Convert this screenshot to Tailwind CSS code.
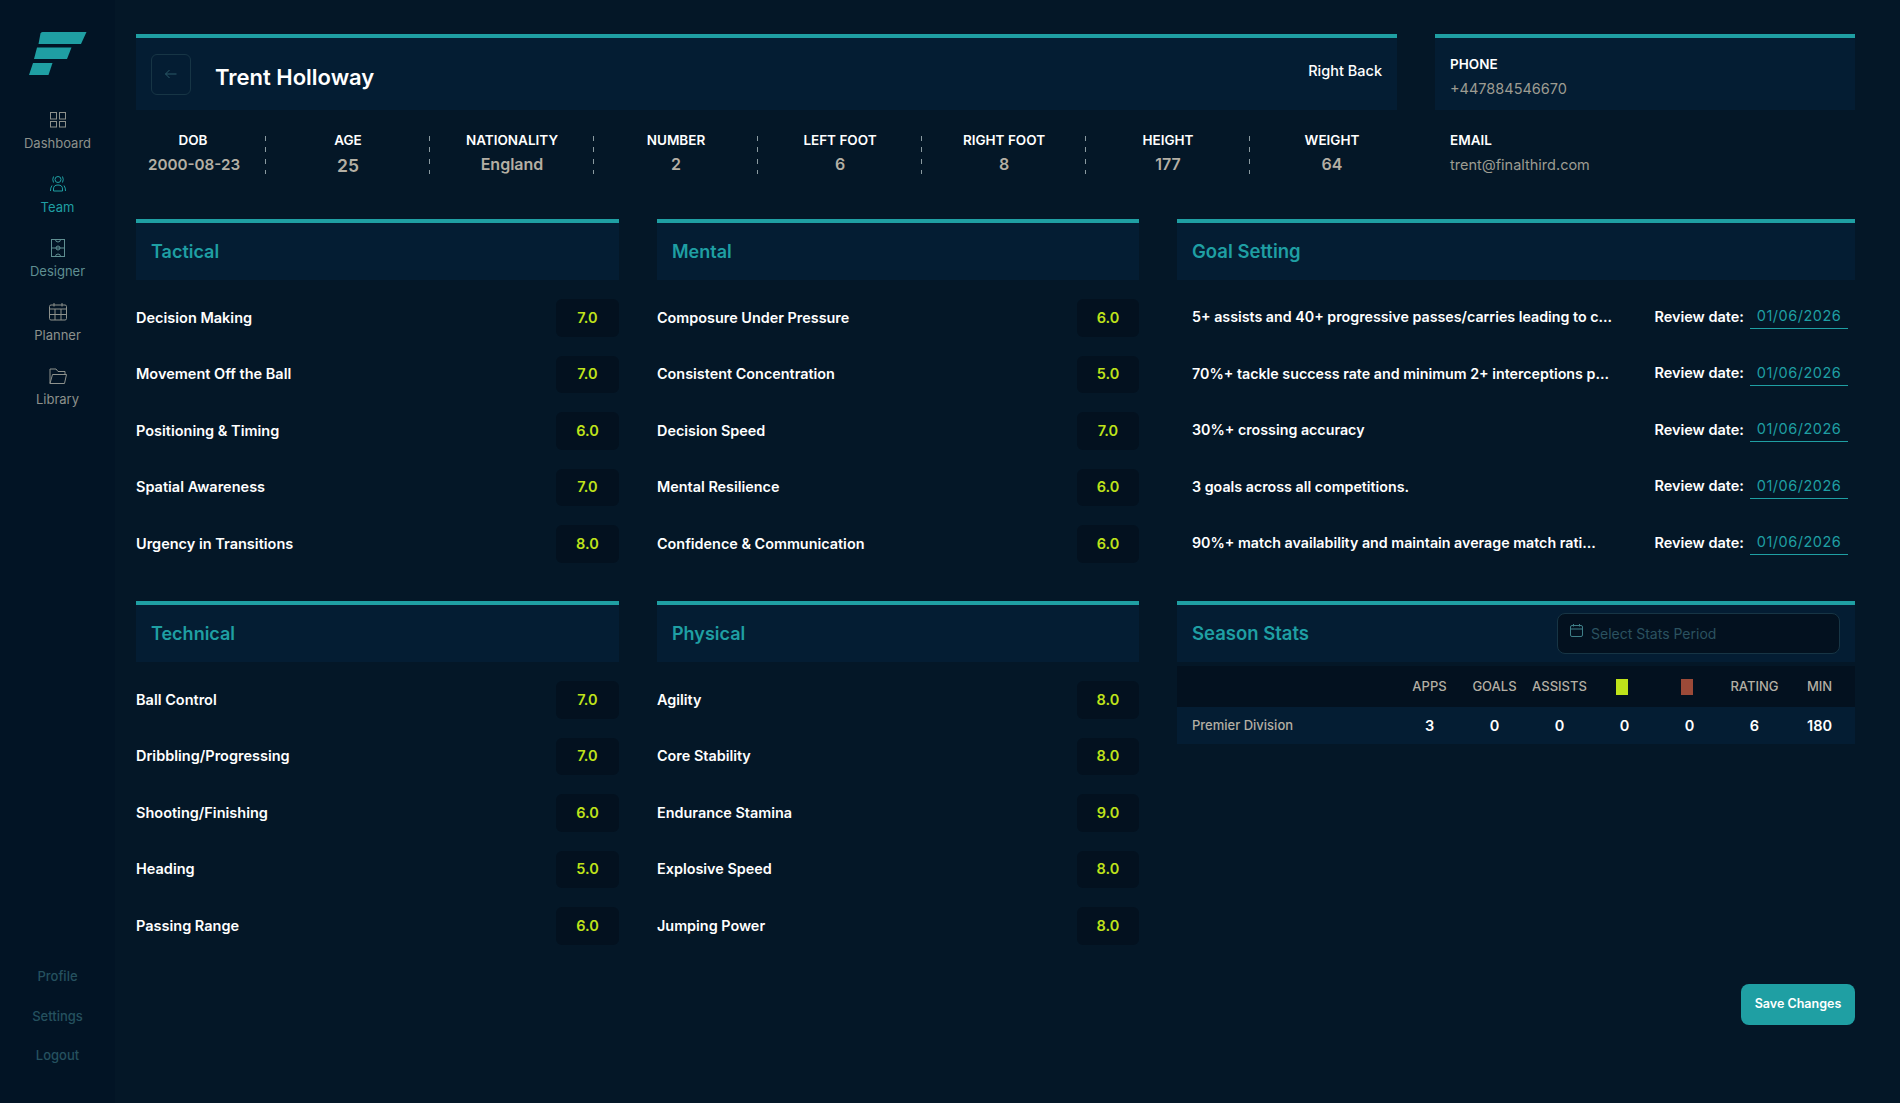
<!DOCTYPE html>
<html lang="en">
<head>
<meta charset="utf-8">
<title>Trent Holloway</title>
<script src="https://cdn.jsdelivr.net/npm/@tailwindcss/browser@4"></script>
</head>
<body class="bg-[#041727] [font-family:Inter,sans-serif] text-white">
<div class="flex h-[1103px] w-[1900px] overflow-hidden">
  <aside class="flex h-full w-[115px] shrink-0 flex-col items-center bg-[#021425] pt-[32px] pb-[38px]">
    <svg class="ml-[1px] h-[43px] w-[58px]" viewBox="0 0 58 43" fill="#1f9fa3"><path d="M11.500 1.500Q11.800 0 13.500 0H57.500L52 12H9.500Z"/><path d="M8 15.500H42.500L38 27H5Z"/><path d="M4 31H23.500L19.500 43H0Z"/></svg>
    <nav class="mt-[34.500px] flex w-full flex-col">
      <a class="flex h-[64px] flex-col items-center text-[#8d918c]">
        <svg class="h-[20px] w-[20px]" viewBox="0 0 20 20" fill="none" stroke="currentColor"><rect x="2.500" y="2.500" width="6" height="6.500"/><rect x="11.500" y="2.500" width="6" height="6.500"/><rect x="2.500" y="11.500" width="6" height="5.500"/><rect x="11.500" y="11.500" width="6" height="5.500"/></svg>
        <span class="mt-[3px] text-[13px] leading-[20px]">Dashboard</span>
      </a>
      <a class="flex h-[64px] flex-col items-center text-[#1f9fa3]">
        <svg class="h-[20px] w-[20px]" viewBox="0 0 20 20" fill="none" stroke="currentColor"><circle cx="10" cy="5.500" r="3"/><path d="M5.500 2.500Q4 5.500 5.500 8.500M14.500 2.500Q16 5.500 14.500 8.500M5.500 17V15Q5.500 11 10 11T14.500 15V17ZM2.500 17Q2.300 14 4 11.500M17.500 17Q17.700 14 16 11.500"/></svg>
        <span class="mt-[3px] text-[13px] leading-[20px]">Team</span>
      </a>
      <a class="flex h-[64px] flex-col items-center text-[#5f8f92]">
        <svg class="h-[20px] w-[20px]" viewBox="0 0 20 20" fill="none" stroke="currentColor"><rect x="3.500" y="1.500" width="13" height="17"/><path d="M3.500 10H16.500M7.500 1.500A2.500 2.500 0 0 0 12.500 1.500M7.500 18.500A2.500 2.500 0 0 1 12.500 18.500"/><circle cx="10" cy="10" r="2"/></svg>
        <span class="mt-[3px] text-[13px] leading-[20px]">Designer</span>
      </a>
      <a class="flex h-[64px] flex-col items-center text-[#8d918c]">
        <svg class="h-[20px] w-[20px]" viewBox="0 0 20 20" fill="none" stroke="currentColor"><rect x="1.500" y="3" width="17" height="15" rx="1.500"/><path d="M1.500 7H18.500M1.500 12.500H18.500M7 7V18M13 7V18M6 1V4.500M14 1V4.500"/></svg>
        <span class="mt-[3px] text-[13px] leading-[20px]">Planner</span>
      </a>
      <a class="flex h-[64px] flex-col items-center text-[#8d918c]">
        <svg class="h-[20px] w-[20px]" viewBox="0 0 20 20" fill="none" stroke="currentColor"><path d="M2 17.500V3H8L10 5.500H17V8.500M2 17.500H16.500L18.500 8.500H4.500Z" stroke-linejoin="round"/></svg>
        <span class="mt-[3px] text-[13px] leading-[20px]">Library</span>
      </a>
    </nav>
    <div class="mt-auto flex flex-col items-center gap-[19.500px] text-[13px] leading-[20px] font-medium text-[#25515f]">
      <a>Profile</a><a>Settings</a><a>Logout</a>
    </div>
  </aside>

  <main class="min-w-0 flex-1 pt-[34px] pr-[45px] pl-[21px]">
    <div class="grid grid-cols-[1261px_420px] gap-x-[38px]">
      <header class="flex h-[76px] items-center border-t-4 border-[#1f9fa3] bg-[#041d33] pr-[15px] pl-[15px]">
        <button class="flex h-[41px] w-[40px] items-center justify-center rounded-md border border-[#173545]">
          <svg class="h-[16px] w-[16px]" viewBox="0 0 16 16" fill="none" stroke="#2a5a68"><path d="M13.500 8H2.500M6.500 4L2.500 8L6.500 12"/></svg>
        </button>
        <h1 class="mt-[5px] ml-[24px] text-[22px] leading-[30px] font-semibold">Trent Holloway</h1>
        <span class="mt-[-7px] ml-auto text-[14.500px] leading-[20px] font-medium">Right Back</span>
      </header>
      <div class="flex h-[76px] flex-col border-t-4 border-[#1f9fa3] bg-[#041d33] pt-[16px] pl-[15px]">
        <span class="text-[13.500px] leading-[20px] font-semibold">PHONE</span>
        <span class="mt-[5px] text-[14.500px] leading-[20px] text-[#9d9c92]">+447884546670</span>
      </div>

      <div class="mt-[26px] flex h-[38px] text-center">
        <div class="w-[130px] shrink-0 bg-[repeating-linear-gradient(to_bottom,#8a9aa0_0_5px,transparent_5px_11.500px)] bg-[length:1px_100%] bg-right bg-no-repeat pr-[14px]"><div class="mt-[-6px] pr-[2px] text-[13.500px] leading-[20px] font-semibold">DOB</div><div class="mt-[4px] text-[15.200px] leading-[22px] font-semibold text-[#b4afa4]">2000-08-23</div></div>
        <div class="w-[164px] shrink-0 bg-[repeating-linear-gradient(to_bottom,#8a9aa0_0_5px,transparent_5px_11.500px)] bg-[length:1px_100%] bg-right bg-no-repeat"><div class="mt-[-6px] text-[13.500px] leading-[20px] font-semibold">AGE</div><div class="mt-[4px] text-[17.500px] leading-[24px] font-semibold text-[#b4afa4]">25</div></div>
        <div class="w-[164px] shrink-0 bg-[repeating-linear-gradient(to_bottom,#8a9aa0_0_5px,transparent_5px_11.500px)] bg-[length:1px_100%] bg-right bg-no-repeat"><div class="mt-[-6px] text-[13.500px] leading-[20px] font-semibold">NATIONALITY</div><div class="mt-[2px] text-[16px] leading-[24px] font-semibold text-[#b4afa4]">England</div></div>
        <div class="w-[164px] shrink-0 bg-[repeating-linear-gradient(to_bottom,#8a9aa0_0_5px,transparent_5px_11.500px)] bg-[length:1px_100%] bg-right bg-no-repeat"><div class="mt-[-6px] text-[13.500px] leading-[20px] font-semibold">NUMBER</div><div class="mt-[2px] text-[16px] leading-[24px] font-semibold text-[#b4afa4]">2</div></div>
        <div class="w-[164px] shrink-0 bg-[repeating-linear-gradient(to_bottom,#8a9aa0_0_5px,transparent_5px_11.500px)] bg-[length:1px_100%] bg-right bg-no-repeat"><div class="mt-[-6px] text-[13.500px] leading-[20px] font-semibold">LEFT FOOT</div><div class="mt-[2px] text-[16px] leading-[24px] font-semibold text-[#b4afa4]">6</div></div>
        <div class="w-[164px] shrink-0 bg-[repeating-linear-gradient(to_bottom,#8a9aa0_0_5px,transparent_5px_11.500px)] bg-[length:1px_100%] bg-right bg-no-repeat"><div class="mt-[-6px] text-[13.500px] leading-[20px] font-semibold">RIGHT FOOT</div><div class="mt-[2px] text-[16px] leading-[24px] font-semibold text-[#b4afa4]">8</div></div>
        <div class="w-[164px] shrink-0 bg-[repeating-linear-gradient(to_bottom,#8a9aa0_0_5px,transparent_5px_11.500px)] bg-[length:1px_100%] bg-right bg-no-repeat"><div class="mt-[-6px] text-[13.500px] leading-[20px] font-semibold">HEIGHT</div><div class="mt-[2px] text-[16px] leading-[24px] font-semibold text-[#b4afa4]">177</div></div>
        <div class="w-[164px] shrink-0"><div class="mt-[-6px] text-[13.500px] leading-[20px] font-semibold">WEIGHT</div><div class="mt-[2px] text-[16px] leading-[24px] font-semibold text-[#b4afa4]">64</div></div>
      </div>
      <div class="mt-[20px] flex flex-col pl-[15px]">
        <span class="text-[13.500px] leading-[20px] font-semibold">EMAIL</span>
        <span class="mt-[5px] text-[14.500px] leading-[20px] text-[#9d9c92]">trent@finalthird.com</span>
      </div>
    </div>

    <div class="mt-[44px] grid grid-cols-[483px_482px_678px] gap-x-[38px]">
      <section>
        <h2 class="flex h-[61px] items-center border-t-4 border-[#1f9fa3] bg-[#041d33] pl-[15px] text-[18px] font-semibold text-[#1f9fa3]">Tactical</h2>
        <ul class="mt-[19px] flex flex-col gap-[19px] text-[14.500px] font-semibold">
          <li class="flex h-[37.500px] items-center justify-between">Decision Making<span class="flex h-full w-[63px] items-center justify-center rounded-md bg-[#03111f] text-[#bfe31a]">7.0</span></li>
          <li class="flex h-[37.500px] items-center justify-between">Movement Off the Ball<span class="flex h-full w-[63px] items-center justify-center rounded-md bg-[#03111f] text-[#bfe31a]">7.0</span></li>
          <li class="flex h-[37.500px] items-center justify-between">Positioning &amp; Timing<span class="flex h-full w-[63px] items-center justify-center rounded-md bg-[#03111f] text-[#bfe31a]">6.0</span></li>
          <li class="flex h-[37.500px] items-center justify-between">Spatial Awareness<span class="flex h-full w-[63px] items-center justify-center rounded-md bg-[#03111f] text-[#bfe31a]">7.0</span></li>
          <li class="flex h-[37.500px] items-center justify-between">Urgency in Transitions<span class="flex h-full w-[63px] items-center justify-center rounded-md bg-[#03111f] text-[#bfe31a]">8.0</span></li>
        </ul>
      </section>
      <section>
        <h2 class="flex h-[61px] items-center border-t-4 border-[#1f9fa3] bg-[#041d33] pl-[15px] text-[18px] font-semibold text-[#1f9fa3]">Mental</h2>
        <ul class="mt-[19px] flex flex-col gap-[19px] text-[14.400px] font-semibold">
          <li class="flex h-[37.500px] items-center justify-between">Composure Under Pressure<span class="flex h-full w-[62px] items-center justify-center rounded-md bg-[#03111f] text-[14.500px] text-[#bfe31a]">6.0</span></li>
          <li class="flex h-[37.500px] items-center justify-between">Consistent Concentration<span class="flex h-full w-[62px] items-center justify-center rounded-md bg-[#03111f] text-[14.500px] text-[#bfe31a]">5.0</span></li>
          <li class="flex h-[37.500px] items-center justify-between">Decision Speed<span class="flex h-full w-[62px] items-center justify-center rounded-md bg-[#03111f] text-[14.500px] text-[#bfe31a]">7.0</span></li>
          <li class="flex h-[37.500px] items-center justify-between">Mental Resilience<span class="flex h-full w-[62px] items-center justify-center rounded-md bg-[#03111f] text-[14.500px] text-[#bfe31a]">6.0</span></li>
          <li class="flex h-[37.500px] items-center justify-between">Confidence &amp; Communication<span class="flex h-full w-[62px] items-center justify-center rounded-md bg-[#03111f] text-[14.500px] text-[#bfe31a]">6.0</span></li>
        </ul>
      </section>
      <section>
        <h2 class="flex h-[61px] items-center border-t-4 border-[#1f9fa3] bg-[#041d33] pl-[15px] text-[18.500px] font-semibold text-[#1f9fa3]">Goal Setting</h2>
        <ul class="mt-[18px] flex flex-col gap-[19px] pr-[7px] pl-[15px] text-[14.250px] font-semibold">
          <li class="flex h-[37.500px] items-center">5+ assists and 40+ progressive passes/carries leading to c...<span class="ml-auto text-[14.500px]">Review date:</span><span class="ml-[6px] flex h-[25px] w-[98px] items-center justify-center border-b border-[#1f9fa3] text-[14.500px] font-normal tracking-[0.5px] text-[#1f9fa3]">01/06/2026</span></li>
          <li class="flex h-[37.500px] items-center">70%+ tackle success rate and minimum 2+ interceptions p...<span class="ml-auto text-[14.500px]">Review date:</span><span class="ml-[6px] flex h-[25px] w-[98px] items-center justify-center border-b border-[#1f9fa3] text-[14.500px] font-normal tracking-[0.5px] text-[#1f9fa3]">01/06/2026</span></li>
          <li class="flex h-[37.500px] items-center">30%+ crossing accuracy<span class="ml-auto text-[14.500px]">Review date:</span><span class="ml-[6px] flex h-[25px] w-[98px] items-center justify-center border-b border-[#1f9fa3] text-[14.500px] font-normal tracking-[0.5px] text-[#1f9fa3]">01/06/2026</span></li>
          <li class="flex h-[37.500px] items-center">3 goals across all competitions.<span class="ml-auto text-[14.500px]">Review date:</span><span class="ml-[6px] flex h-[25px] w-[98px] items-center justify-center border-b border-[#1f9fa3] text-[14.500px] font-normal tracking-[0.5px] text-[#1f9fa3]">01/06/2026</span></li>
          <li class="flex h-[37.500px] items-center">90%+ match availability and maintain average match rati...<span class="ml-auto text-[14.500px]">Review date:</span><span class="ml-[6px] flex h-[25px] w-[98px] items-center justify-center border-b border-[#1f9fa3] text-[14.500px] font-normal tracking-[0.5px] text-[#1f9fa3]">01/06/2026</span></li>
        </ul>
      </section>

      <section class="mt-[38.500px]">
        <h2 class="flex h-[61px] items-center border-t-4 border-[#1f9fa3] bg-[#041d33] pl-[15px] text-[18px] font-semibold text-[#1f9fa3]">Technical</h2>
        <ul class="mt-[19px] flex flex-col gap-[19px] text-[14.500px] font-semibold">
          <li class="flex h-[37.500px] items-center justify-between">Ball Control<span class="flex h-full w-[63px] items-center justify-center rounded-md bg-[#03111f] text-[#bfe31a]">7.0</span></li>
          <li class="flex h-[37.500px] items-center justify-between">Dribbling/Progressing<span class="flex h-full w-[63px] items-center justify-center rounded-md bg-[#03111f] text-[#bfe31a]">7.0</span></li>
          <li class="flex h-[37.500px] items-center justify-between">Shooting/Finishing<span class="flex h-full w-[63px] items-center justify-center rounded-md bg-[#03111f] text-[#bfe31a]">6.0</span></li>
          <li class="flex h-[37.500px] items-center justify-between">Heading<span class="flex h-full w-[63px] items-center justify-center rounded-md bg-[#03111f] text-[#bfe31a]">5.0</span></li>
          <li class="flex h-[37.500px] items-center justify-between">Passing Range<span class="flex h-full w-[63px] items-center justify-center rounded-md bg-[#03111f] text-[#bfe31a]">6.0</span></li>
        </ul>
      </section>
      <section class="mt-[38.500px]">
        <h2 class="flex h-[61px] items-center border-t-4 border-[#1f9fa3] bg-[#041d33] pl-[15px] text-[18px] font-semibold text-[#1f9fa3]">Physical</h2>
        <ul class="mt-[19px] flex flex-col gap-[19px] text-[14.400px] font-semibold">
          <li class="flex h-[37.500px] items-center justify-between">Agility<span class="flex h-full w-[62px] items-center justify-center rounded-md bg-[#03111f] text-[14.500px] text-[#bfe31a]">8.0</span></li>
          <li class="flex h-[37.500px] items-center justify-between">Core Stability<span class="flex h-full w-[62px] items-center justify-center rounded-md bg-[#03111f] text-[14.500px] text-[#bfe31a]">8.0</span></li>
          <li class="flex h-[37.500px] items-center justify-between">Endurance Stamina<span class="flex h-full w-[62px] items-center justify-center rounded-md bg-[#03111f] text-[14.500px] text-[#bfe31a]">9.0</span></li>
          <li class="flex h-[37.500px] items-center justify-between">Explosive Speed<span class="flex h-full w-[62px] items-center justify-center rounded-md bg-[#03111f] text-[14.500px] text-[#bfe31a]">8.0</span></li>
          <li class="flex h-[37.500px] items-center justify-between">Jumping Power<span class="flex h-full w-[62px] items-center justify-center rounded-md bg-[#03111f] text-[14.500px] text-[#bfe31a]">8.0</span></li>
        </ul>
      </section>
      <section class="mt-[38.500px]">
        <div class="flex h-[61px] items-center justify-between border-t-4 border-[#1f9fa3] bg-[#041d33] pr-[15px] pl-[15px]">
          <h2 class="text-[18.500px] font-semibold text-[#1f9fa3]">Season Stats</h2>
          <div class="flex h-[41px] w-[283px] items-center rounded-lg border border-[#173545] bg-[#03111f] pl-[11px]">
            <svg class="mb-[6px] h-[15px] w-[15px]" viewBox="0 0 15 15" fill="none" stroke="#3f7f88"><rect x="1.500" y="2.500" width="12" height="11" rx="1.500"/><path d="M1.500 6H13.500M4.500 1V3.500M10.500 1V3.500"/></svg>
            <span class="ml-[7px] text-[14px] text-[#2b5260]">Select Stats Period</span>
          </div>
        </div>
        <div class="mt-[4px] grid h-[41px] grid-cols-[220px_repeat(7,65px)] items-center justify-items-center bg-[#03111f] text-[13px] font-medium text-[#b4afa4]">
          <span></span><span>APPS</span><span>GOALS</span><span>ASSISTS</span><span class="mr-[5px] h-[16px] w-[12px] bg-[#bfe31a]"></span><span class="mr-[5px] h-[16px] w-[12px] bg-[#9c4a38]"></span><span>RATING</span><span>MIN</span>
        </div>
        <div class="grid h-[37px] grid-cols-[220px_repeat(7,65px)] items-center justify-items-center bg-[#041d33] text-[14.500px] font-semibold">
          <span class="justify-self-start pt-[1px] pl-[15px] text-[13px] font-medium text-[#b4afa4]">Premier Division</span><span>3</span><span>0</span><span>0</span><span>0</span><span>0</span><span>6</span><span>180</span>
        </div>
      </section>
    </div>

    <div class="mt-[39px] flex justify-end">
      <button class="h-[41px] w-[114px] rounded-lg bg-[#1f9fa3] pt-[1px] text-[12.500px] font-semibold text-white">Save Changes</button>
    </div>
  </main>
</div>
</body>
</html>
